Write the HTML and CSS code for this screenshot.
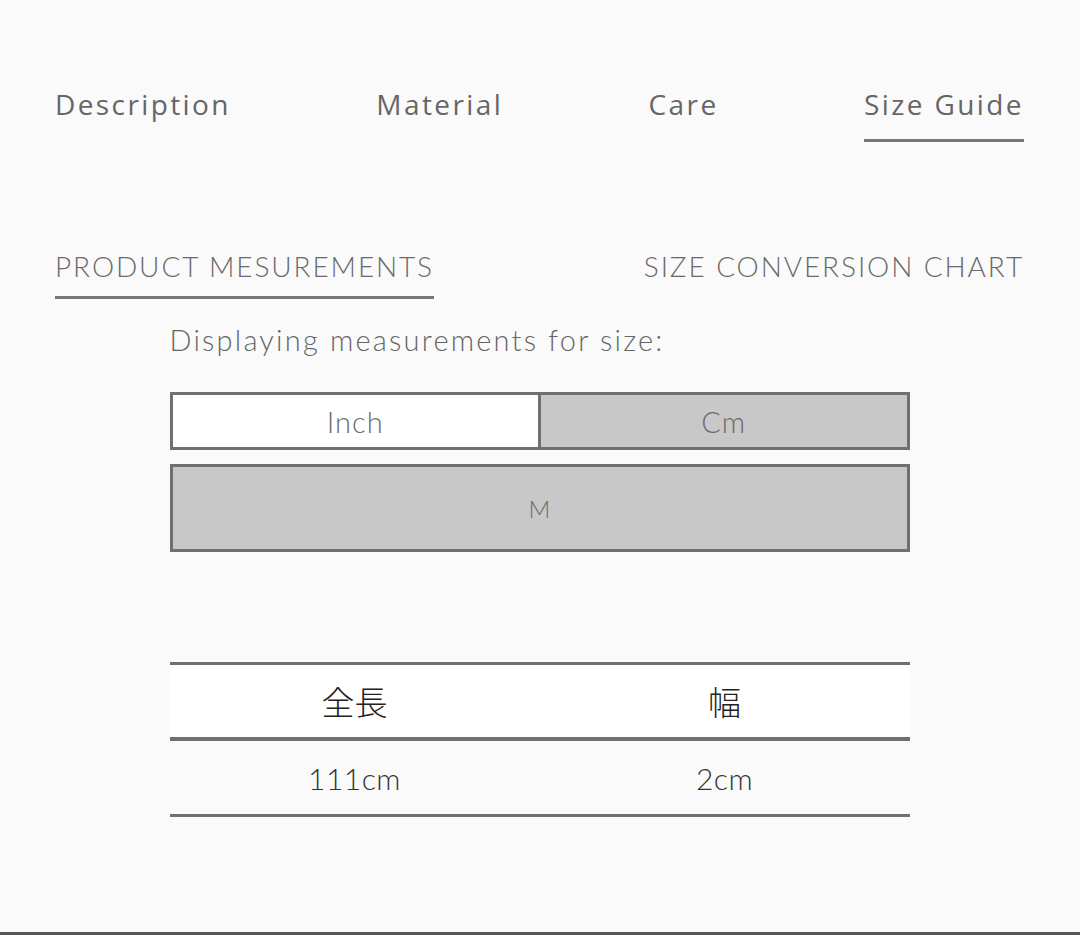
FILE: index.html
```html
<!DOCTYPE html>
<html lang="ja">
<head>
<meta charset="utf-8">
<title>Size Guide</title>
<link rel="stylesheet" href="styles.css">
</head>
<body>
<div class="page">
  <nav class="tabs">
    <span class="tab">Description</span>
    <span class="tab">Material</span>
    <span class="tab">Care</span>
    <span class="tab active">Size Guide</span>
  </nav>
  <div class="subtabs">
    <span class="subtab active">PRODUCT MESUREMENTS</span>
    <span class="subtab">SIZE CONVERSION CHART</span>
  </div>
  <div class="panel">
    <p class="caption">Displaying measurements for size:</p>
    <div class="units">
      <div class="unit selected">Inch</div>
      <div class="unit">Cm</div>
    </div>
    <div class="size">M</div>
    <table class="measure">
      <thead>
        <tr><th>全長</th><th>幅</th></tr>
      </thead>
      <tbody>
        <tr><td>111cm</td><td>2cm</td></tr>
      </tbody>
    </table>
  </div>
</div>
<div class="bottom-rule"></div>
</body>
</html>
```
FILE: styles.css
```css
html, body {
  margin: 0;
  padding: 0;
  background: #fafafa;
}
body {
  width: 1080px;
  height: 935px;
  overflow: hidden;
  position: relative;
  font-family: "Lato", "Noto Sans CJK JP", sans-serif;
}
.page {
  padding: 84px 56px 0 55px;
}
.tabs {
  display: flex;
  justify-content: space-between;
  align-items: flex-start;
}
.tab {
  font-family: "Open Sans", sans-serif;
  font-size: 28px;
  line-height: 40px;
  letter-spacing: 2.4px;
  color: #666;
  padding-bottom: 15px;
  border-bottom: 3px solid transparent;
}
.tab.active {
  border-bottom-color: #777;
}
.subtabs {
  margin-top: 106px;
  display: flex;
  justify-content: space-between;
  align-items: flex-start;
}
.subtab {
  font-size: 28px;
  font-weight: 300;
  line-height: 36px;
  letter-spacing: 1.9px;
  color: #6a6a6a;
  padding-bottom: 12px;
  border-bottom: 3px solid transparent;
}
.subtab.active {
  border-bottom-color: #777;
}
.panel {
  width: 740px;
  margin: 0 auto;
}
.caption {
  margin: 21px 0 0 0;
  font-size: 29px;
  font-weight: 300;
  line-height: 40px;
  letter-spacing: 2.2px;
  color: #666;
}
.units {
  margin-top: 32px;
  display: flex;
  border: 3px solid #707070;
  height: 52px;
}
.unit {
  flex: 1;
  display: flex;
  align-items: center;
  justify-content: center;
  background: #c8c8c8;
  font-size: 29px;
  font-weight: 300;
  letter-spacing: 1px;
  color: #6c6c6c;
}
.unit.selected {
  background: #fff;
  border-right: 3px solid #707070;
}
.size {
  margin-top: 14px;
  height: 82px;
  border: 3px solid #707070;
  background: #c8c8c8;
  display: flex;
  align-items: center;
  justify-content: center;
  font-size: 24px;
  font-weight: 300;
  color: #6c6c6c;
}
.measure {
  margin-top: 110px;
  width: 100%;
  border-collapse: collapse;
  table-layout: fixed;
}
.measure th {
  background: #fff;
  border-top: 3px solid #707070;
  border-bottom: 4px solid #707070;
  height: 72px;
  padding: 0;
  font-family: "Noto Sans CJK JP", sans-serif;
  font-weight: 300;
  font-size: 33px;
  color: #222;
}
.measure td {
  border-bottom: 3px solid #707070;
  height: 73px;
  padding: 0;
  text-align: center;
  font-size: 30px;
  font-weight: 300;
  letter-spacing: 0.5px;
  color: #333;
}
.bottom-rule {
  position: absolute;
  left: 0;
  right: 0;
  bottom: 0;
  height: 3px;
  background: #555;
}
```
